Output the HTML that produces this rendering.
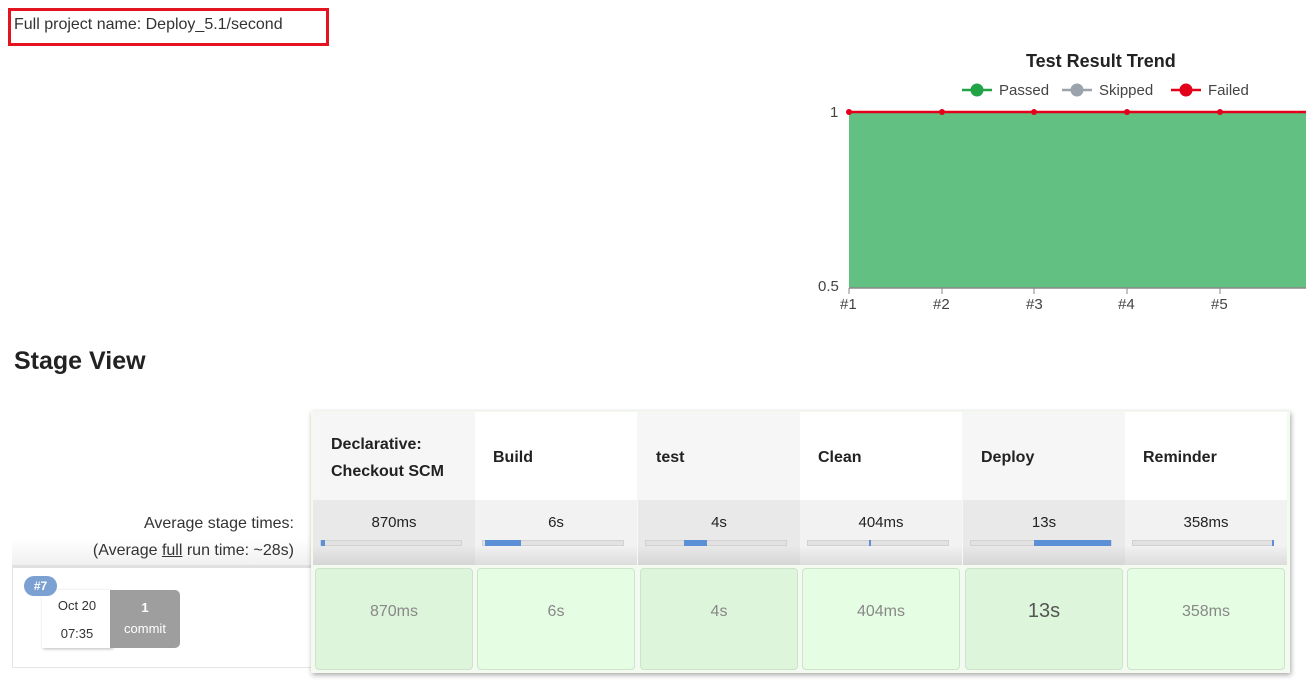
<!DOCTYPE html>
<html><head><meta charset="utf-8"><style>
*{margin:0;padding:0;box-sizing:border-box}
body{width:1306px;height:682px;overflow:hidden;background:#fff;font-family:"Liberation Sans",sans-serif;color:#333;position:relative}
.a{position:absolute}
.hd{position:absolute;top:412px;height:88px;width:162px;font-weight:bold;font-size:16px;color:#222;padding-left:18px;display:flex;align-items:center;line-height:27px;padding-top:3px}
.av{position:absolute;top:500px;height:65px;width:162px;text-align:center;font-size:15px;color:#222;padding-top:14px;background:linear-gradient(#f2f2f2 70%,#dcdcdc)}
.bar{position:absolute;top:40px;left:7px;width:142px;height:6px;background:#e2e2e2;border:1px solid #d2d2d2}
.bl{position:absolute;top:-1px;height:6px;background:#5b8fd6}
.cl{position:absolute;top:568px;height:102px;width:158px;border:1px solid #cde3cb;border-radius:4px;text-align:center;font-size:16px;color:#888;padding-top:34px}
</style></head><body>
<div class="a" style="left:8px;top:8px;width:321px;height:38px;border:3px solid #e3141f"></div>
<div class="a" style="left:14px;top:16px;font-size:16px;color:#333">Full project name: Deploy_5.1/second</div>

<div class="a" style="left:1026px;top:51px;font-size:18px;font-weight:bold;color:#222">Test Result Trend</div>
<svg class="a" style="left:800px;top:75px" width="506" height="240">
<g stroke-width="2.5"><line x1="162" y1="15" x2="192" y2="15" stroke="#22a348"/><circle cx="177" cy="15" r="6.5" fill="#22a348"/>
<line x1="262" y1="15" x2="292" y2="15" stroke="#9aa3ab"/><circle cx="277" cy="15" r="6.5" fill="#9aa3ab"/>
<line x1="371" y1="15" x2="401" y2="15" stroke="#e3001b"/><circle cx="386" cy="15" r="6.5" fill="#e3001b"/></g>
<g font-family="Liberation Sans,sans-serif" font-size="15" fill="#444"><text x="199" y="20">Passed</text><text x="299" y="20">Skipped</text><text x="408" y="20">Failed</text>
<text x="30" y="42">1</text><text x="18" y="216">0.5</text>
<text x="40" y="234">#1</text><text x="133" y="234">#2</text><text x="226" y="234">#3</text><text x="318" y="234">#4</text><text x="411" y="234">#5</text></g>
<rect x="49" y="37" width="457" height="176" fill="#62c083"/>
<line x1="49" y1="213" x2="506" y2="213" stroke="#888" stroke-width="1.5"/>
<g stroke="#888"><line x1="49" y1="213" x2="49" y2="219"/><line x1="142" y1="213" x2="142" y2="219"/><line x1="234" y1="213" x2="234" y2="219"/><line x1="327" y1="213" x2="327" y2="219"/><line x1="420" y1="213" x2="420" y2="219"/></g>
<line x1="49" y1="37" x2="506" y2="37" stroke="#e3001b" stroke-width="2.5"/>
<g fill="#e3001b"><circle cx="49" cy="37" r="3"/><circle cx="142" cy="37" r="3"/><circle cx="234" cy="37" r="3"/><circle cx="327" cy="37" r="3"/><circle cx="420" cy="37" r="3"/></g>
</svg>

<div class="a" style="left:14px;top:347px;font-size:25px;font-weight:bold;color:#222">Stage View</div>

<div class="a" style="left:12px;top:500px;width:300px;height:65px;background:linear-gradient(#fff 60%,#f0f0f0)"></div>
<div class="a" style="left:12px;top:510px;width:282px;text-align:right;font-size:16px;color:#333;line-height:27px">Average stage times:<br>(Average <u>full</u> run time: ~28s)</div>
<div class="a" style="left:12px;top:565px;width:302px;height:103px;border:1px solid #e5e5e5;border-top:3px solid #e0e0e0"></div>
<div class="a" style="left:42px;top:590px;width:70px;height:58px;background:#fff;box-shadow:1px 1px 3px #bbb;text-align:center;font-size:13px;color:#333;line-height:28px;padding-top:2px">Oct 20<br>07:35</div>
<div class="a" style="left:110px;top:590px;width:70px;height:58px;background:#9e9e9e;border-radius:0 5px 5px 0;text-align:center;font-size:13px;color:#fff;line-height:21px;padding-top:7px"><b>1</b><br>commit</div>
<div class="a" style="left:24px;top:576px;width:33px;height:20px;background:#7aa1d2;border-radius:10px;color:#fff;font-size:12px;font-weight:bold;text-align:center;line-height:20px">#7</div>

<div class="a" style="left:311px;top:411px;width:979px;height:262px;box-shadow:1px 2px 5px rgba(0,0,0,.35);background:#f3fbf1"></div>
<div class="hd" style="left:313px;background:#f6f6f6">Declarative:<br>Checkout SCM</div>
<div class="hd" style="left:475px;background:#fff">Build</div>
<div class="hd" style="left:638px;background:#f6f6f6">test</div>
<div class="hd" style="left:800px;background:#fff">Clean</div>
<div class="hd" style="left:963px;background:#f6f6f6">Deploy</div>
<div class="hd" style="left:1125px;background:#fff">Reminder</div>

<div class="av" style="left:313px;background:linear-gradient(#e9e9e9 70%,#d6d6d6)">870ms<div class="bar"><div class="bl" style="left:0;width:4px"></div></div></div>
<div class="av" style="left:475px">6s<div class="bar"><div class="bl" style="left:2px;width:36px"></div></div></div>
<div class="av" style="left:638px;background:linear-gradient(#e9e9e9 70%,#d6d6d6)">4s<div class="bar"><div class="bl" style="left:38px;width:23px"></div></div></div>
<div class="av" style="left:800px">404ms<div class="bar"><div class="bl" style="left:61px;width:2px"></div></div></div>
<div class="av" style="left:963px;background:linear-gradient(#e9e9e9 70%,#d6d6d6)">13s<div class="bar"><div class="bl" style="left:63px;width:77px"></div></div></div>
<div class="av" style="left:1125px">358ms<div class="bar"><div class="bl" style="left:139px;width:2px"></div></div></div>

<div class="cl" style="left:315px;background:#ddf6db">870ms</div>
<div class="cl" style="left:477px;background:#e5fde3">6s</div>
<div class="cl" style="left:640px;background:#ddf6db">4s</div>
<div class="cl" style="left:802px;background:#e5fde3">404ms</div>
<div class="cl" style="left:965px;background:#ddf6db;font-size:20px;color:#555;padding-top:31px">13s</div>
<div class="cl" style="left:1127px;background:#e5fde3">358ms</div>
</body></html>
